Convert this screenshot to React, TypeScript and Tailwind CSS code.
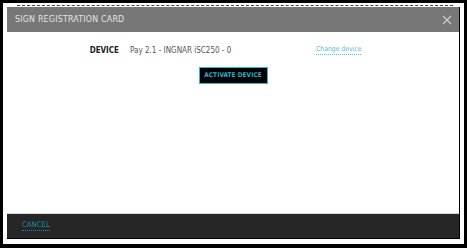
import React from 'react';

const font = { fontFamily: '"Liberation Sans Narrow", "DejaVu Sans Condensed", Roboto, sans-serif' };

export default function App() {
  return (
    <div className="w-[467px] h-[248px] bg-white border-black border-t-[3px] border-l-[3px] border-r-[3px] border-b-[4px] px-[4px] pt-[4px] pb-[5px]" style={font}>
      <div className="h-full flex flex-col border-r border-b border-black relative">
        {/* strip of the page behind the modal */}
        <div className="absolute -top-[2px] left-[10px] right-[6px] border-t border-dashed border-[#444]" />

        {/* Header */}
        <div className="h-[25px] bg-[#777777] flex items-center justify-between pl-[8px] pr-[7px] shrink-0">
          <span className="text-[8.8px] text-[#e4e4e4] tracking-[0.2px] leading-none">SIGN REGISTRATION CARD</span>
          <svg width="10" height="10" viewBox="0 0 10 10">
            <path d="M1 1 L9 9 M9 1 L1 9" stroke="#cfcfcf" strokeWidth="1.1" />
          </svg>
        </div>

        {/* Body */}
        <div className="flex-1 bg-white">
          <div className="flex items-center pt-[13px] h-[24px]">
            <span className="w-[112px] text-right text-[8px] font-bold text-[#222] leading-none">DEVICE</span>
            <span className="ml-[11px] w-[186px] text-[8px] text-[#555] leading-none">Pay 2.1 - INGNAR iSC250 - 0</span>
            <a className="text-[6.8px] text-[#52b9da] leading-none border-b border-dotted border-[#52b9da] pb-[1px]">Change device</a>
          </div>
          <div className="flex justify-center pt-[11px]">
            <button className="h-[17px] w-[69px] bg-black border border-[#35b6d6] text-[#2aaed0] text-[6.4px] font-bold leading-none tracking-[0.1px]">
              ACTIVATE DEVICE
            </button>
          </div>
        </div>

        {/* Footer */}
        <div className="h-[25px] bg-[#262626] flex items-center pl-[15px] shrink-0 border-t border-[#d8d8d8]">
          <a className="text-[7.7px] text-[#1d8ba3] leading-none border-b border-dotted border-[#1d8ba3] pb-[1px]">CANCEL</a>
        </div>
      </div>
    </div>
  );
}
